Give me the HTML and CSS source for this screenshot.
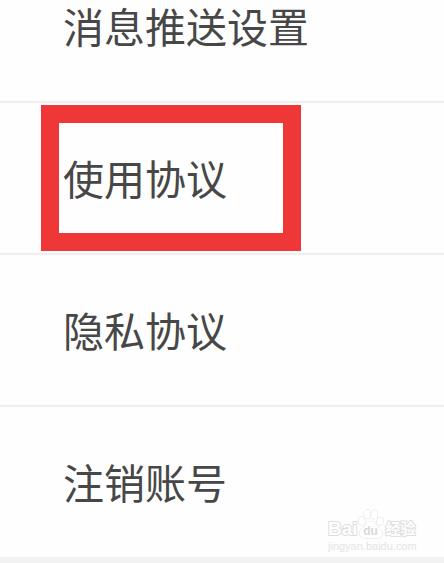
FILE: index.html
```
<!DOCTYPE html>
<html lang="zh-CN">
<head>
    <meta charset="UTF-8">
    <meta name="viewport" content="width=device-width, initial-scale=1.0">
    <title>设置</title>
    <link rel="stylesheet" href="styles.css">
</head>
<body>

    <!-- Settings list -->
    <nav class="settings">
        <a class="row first" href="#push">消息推送设置</a>
        <a class="row marked" href="#terms">使用协议</a>
        <a class="row" href="#privacy">隐私协议</a>
        <a class="row last" href="#account">注销账号</a>
    </nav>

    <!-- Watermark -->
    <div class="watermark">
        <div class="brand">
            <span class="bai">Bai</span>
            <span class="paw">
                <svg width="26" height="30" viewBox="0 0 26 30">
                    <ellipse cx="3.8" cy="12" rx="3.1" ry="4.1" transform="rotate(-12 3.8 12)"/>
                    <ellipse cx="9.3" cy="5.3" rx="3.2" ry="4.4"/>
                    <ellipse cx="16.4" cy="5.5" rx="3.2" ry="4.4" transform="rotate(8 16.4 5.5)"/>
                    <ellipse cx="22" cy="12.3" rx="3.1" ry="4.1" transform="rotate(12 22 12.3)"/>
                    <path d="M13 12.2c-2.8 0-4 2-5.400 4.200C6 18.800 1.500 20.500 1.500 24.300c0 3 2.700 4.900 5.700 4.900 2 0 3.700-.4 5.800-.4s3.800.4 5.800.4c3 0 5.700-1.900 5.700-4.900 0-3.800-4.500-5.500-6.100-7.900C17 14.200 15.800 12.200 13 12.200z"/>
                </svg>
                <span class="du">du</span>
            </span>
            <span class="jingyan">经验</span>
        </div>
        <div class="site">jingyan.baidu.com</div>
    </div>

</body>
</html>
```
FILE: styles.css
```
body {
    margin: 0;
    background: #f2f2f2;
    font-family: "Noto Sans CJK SC", sans-serif;
    color: #474747;
}

.settings {
    background: #fefefe;
}

.row {
    display: block;
    position: relative;
    padding: 49px 63px 51px;
    border-bottom: 2px solid #efefef;
    font-size: 41px;
    line-height: 50px;
    white-space: nowrap;
    color: inherit;
    text-decoration: none;
}

.first {
    padding-top: 0;
}

.last {
    border-bottom: none;
}

/* Red frame round the highlighted row */
.marked::after {
    content: "";
    position: absolute;
    top: 2px;
    left: 41px;
    width: 224px;
    height: 110px;
    border: 18px solid #f03737;
}

.watermark {
    position: absolute;
    top: 509px;
    left: 328px;
    font-family: "Liberation Sans", "Noto Sans CJK SC", sans-serif;
    color: #fff;
}

.brand {
    display: flex;
    align-items: flex-end;
    height: 30px;
    line-height: 20px;
    -webkit-text-stroke: 2px #dedede;
    paint-order: stroke fill;
}

.bai {
    font-size: 19px;
    font-weight: bold;
}

.paw {
    position: relative;
    height: 30px;
}

.paw svg {
    display: block;
    fill: #fff;
    stroke: #dedede;
    stroke-width: 1;
}

.du {
    position: absolute;
    right: 0;
    bottom: 1px;
    left: 0;
    font-size: 12px;
    line-height: 14px;
    font-weight: bold;
    text-align: center;
    color: #d8d8d8;
    -webkit-text-stroke: 0;
}

.jingyan {
    padding-left: 2px;
    font-size: 15px;
    font-weight: bold;
}

.site {
    font-size: 11px;
    line-height: 14px;
    color: #e4e4e4;
}
```
